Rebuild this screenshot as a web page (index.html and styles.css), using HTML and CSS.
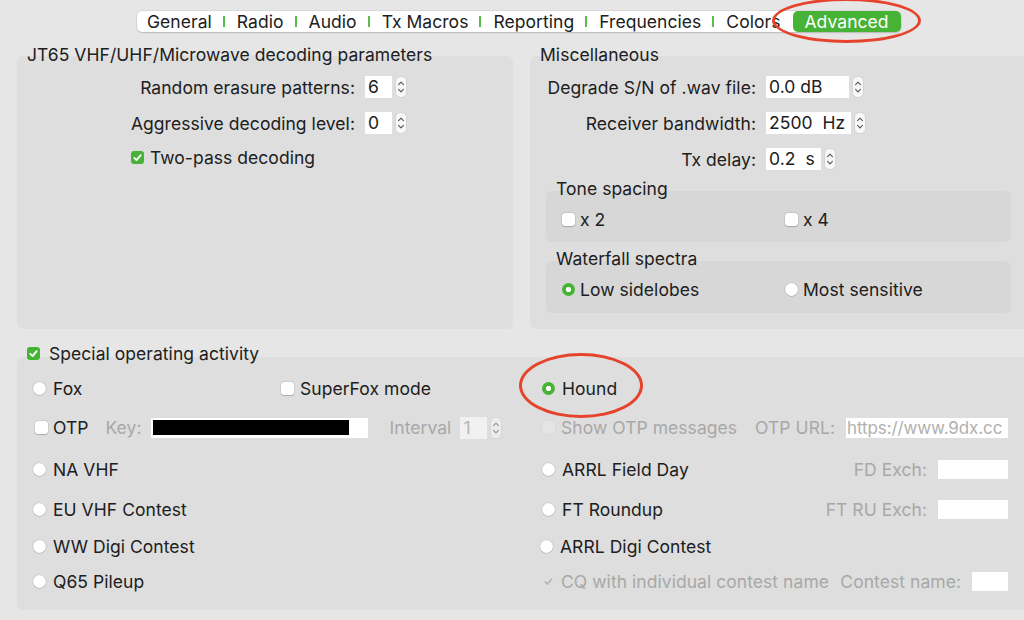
FILE: index.html
```html
<!DOCTYPE html>
<html>
  <head>
    <meta charset="utf-8">
    <title>Settings - Advanced</title>
    <link rel="stylesheet" href="styles.css">
  </head>
  <body>
    <div class="tabs-wrap">
      <div class="tabs">
        <span class="tab">General</span><i class="sep"></i>
        <span class="tab">Radio</span><i class="sep"></i>
        <span class="tab">Audio</span><i class="sep"></i>
        <span class="tab">Tx Macros</span><i class="sep"></i>
        <span class="tab">Reporting</span><i class="sep"></i>
        <span class="tab">Frequencies</span><i class="sep"></i>
        <span class="tab">Colors</span>
        <span class="tab active">Advanced</span>
      </div>
    </div>

    <div class="top">
      <div class="group left">
        <div class="group-title">JT65 VHF/UHF/Microwave decoding parameters</div>
        <div class="group-box">
          <div class="form">
            <span class="lbl">Random erasure patterns:</span>
            <div class="spin">
              <span class="field w27">6</span>
              <svg class="stepper" width="12" height="22" viewBox="0 0 12 22"><rect x="0.5" y="0.5" width="11" height="21" rx="5" fill="#f8f8f8" stroke="#c4c4c4" stroke-width="0.6"/><path d="M3.6 8.6 6 6.2 8.4 8.6M3.6 13.4 6 15.8 8.4 13.4" fill="none" stroke="#5a5a5a" stroke-width="1.2" stroke-linecap="round" stroke-linejoin="round"/></svg>
            </div>
            <span class="lbl">Aggressive decoding level:</span>
            <div class="spin">
              <span class="field w27">0</span>
              <svg class="stepper" width="12" height="22" viewBox="0 0 12 22"><rect x="0.5" y="0.5" width="11" height="21" rx="5" fill="#f8f8f8" stroke="#c4c4c4" stroke-width="0.6"/><path d="M3.6 8.6 6 6.2 8.4 8.6M3.6 13.4 6 15.8 8.4 13.4" fill="none" stroke="#5a5a5a" stroke-width="1.2" stroke-linecap="round" stroke-linejoin="round"/></svg>
            </div>
          </div>
          <div class="check-row">
            <span class="cb on"><svg width="13" height="13" viewBox="0 0 13 13"><path d="M3.3 6.9 5.5 9.1 9.7 4.1" fill="none" stroke="#fff" stroke-width="1.8" stroke-linecap="round" stroke-linejoin="round"/></svg></span>Two-pass decoding
          </div>
        </div>
      </div>

      <div class="group right">
        <div class="group-title">Miscellaneous</div>
        <div class="group-box">
          <div class="form misc">
            <span class="lbl">Degrade S/N of .wav file:</span>
            <div class="spin">
              <span class="field w83">0.0 dB</span>
              <svg class="stepper" width="12" height="22" viewBox="0 0 12 22"><rect x="0.5" y="0.5" width="11" height="21" rx="5" fill="#f8f8f8" stroke="#c4c4c4" stroke-width="0.6"/><path d="M3.6 8.6 6 6.2 8.4 8.6M3.6 13.4 6 15.8 8.4 13.4" fill="none" stroke="#5a5a5a" stroke-width="1.2" stroke-linecap="round" stroke-linejoin="round"/></svg>
            </div>
            <span class="lbl">Receiver bandwidth:</span>
            <div class="spin">
              <span class="field w85">2500&nbsp; Hz</span>
              <svg class="stepper" width="12" height="22" viewBox="0 0 12 22"><rect x="0.5" y="0.5" width="11" height="21" rx="5" fill="#f8f8f8" stroke="#c4c4c4" stroke-width="0.6"/><path d="M3.6 8.6 6 6.2 8.4 8.6M3.6 13.4 6 15.8 8.4 13.4" fill="none" stroke="#5a5a5a" stroke-width="1.2" stroke-linecap="round" stroke-linejoin="round"/></svg>
            </div>
            <span class="lbl">Tx delay:</span>
            <div class="spin">
              <span class="field w55">0.2&nbsp; s</span>
              <svg class="stepper" width="12" height="22" viewBox="0 0 12 22"><rect x="0.5" y="0.5" width="11" height="21" rx="5" fill="#f8f8f8" stroke="#c4c4c4" stroke-width="0.6"/><path d="M3.6 8.6 6 6.2 8.4 8.6M3.6 13.4 6 15.8 8.4 13.4" fill="none" stroke="#5a5a5a" stroke-width="1.2" stroke-linecap="round" stroke-linejoin="round"/></svg>
            </div>
          </div>

          <div class="sub-title tone">Tone spacing</div>
          <div class="sub-box tone">
            <span class="opt"><span class="cb"></span>x 2</span>
            <span class="opt"><span class="cb"></span>x 4</span>
          </div>

          <div class="sub-title fall">Waterfall spectra</div>
          <div class="sub-box fall">
            <span class="opt"><span class="rb on"></span>Low sidelobes</span>
            <span class="opt"><span class="rb"></span>Most sensitive</span>
          </div>
        </div>
      </div>
    </div>

    <div class="group special">
      <div class="group-title"><span class="cb on"><svg width="13" height="13" viewBox="0 0 13 13"><path d="M3.3 6.9 5.5 9.1 9.7 4.1" fill="none" stroke="#fff" stroke-width="1.8" stroke-linecap="round" stroke-linejoin="round"/></svg></span>Special operating activity</div>
      <div class="group-box">
        <div class="row r1">
          <span class="opt"><span class="rb"></span>Fox</span>
          <span class="opt"><span class="cb"></span>SuperFox mode</span>
          <span class="opt"><span class="rb on"></span>Hound</span>
        </div>

        <div class="row r2">
          <div class="otp">
            <span class="opt otp-cb"><span class="cb"></span>OTP</span>
            <span class="dim key-lbl">Key:</span>
            <span class="field key"><span class="secret"></span></span>
            <span class="dim int-lbl">Interval</span>
            <div class="spin">
              <span class="field w27 off">1</span>
              <svg class="stepper off" width="12" height="22" viewBox="0 0 12 22"><rect x="0.5" y="0.5" width="11" height="21" rx="5" fill="#f8f8f8" stroke="#c4c4c4" stroke-width="0.6"/><path d="M3.6 8.6 6 6.2 8.4 8.6M3.6 13.4 6 15.8 8.4 13.4" fill="none" stroke="#5a5a5a" stroke-width="1.2" stroke-linecap="round" stroke-linejoin="round"/></svg>
            </div>
          </div>
          <div class="colc">
            <span class="opt dim"><span class="cb dis"></span>Show OTP messages</span>
            <span class="right-part"><span class="dim">OTP URL:</span><span class="field url">https://www.9dx.cc</span></span>
          </div>
        </div>

        <div class="row">
          <span class="opt"><span class="rb"></span>NA VHF</span>
          <span></span>
          <div class="colc">
            <span class="opt"><span class="rb"></span>ARRL Field Day</span>
            <span class="right-part"><span class="dim">FD Exch:</span><span class="field w70"></span></span>
          </div>
        </div>

        <div class="row r4">
          <span class="opt"><span class="rb"></span>EU VHF Contest</span>
          <span></span>
          <div class="colc">
            <span class="opt"><span class="rb"></span>FT Roundup</span>
            <span class="right-part"><span class="dim">FT RU Exch:</span><span class="field w70"></span></span>
          </div>
        </div>

        <div class="row r5">
          <span class="opt"><span class="rb"></span>WW Digi Contest</span>
          <span></span>
          <div class="colc">
            <span class="opt shift"><span class="rb"></span>ARRL Digi Contest</span>
          </div>
        </div>

        <div class="row r6">
          <span class="opt"><span class="rb"></span>Q65 Pileup</span>
          <span></span>
          <div class="colc">
            <span class="opt dim"><span class="cb dis ck"><svg width="13" height="13" viewBox="0 0 13 13"><path d="M3.3 6.9 5.5 9.1 9.7 4.1" fill="none" stroke="#b4b4b4" stroke-width="1.6" stroke-linecap="round" stroke-linejoin="round"/></svg></span>CQ with individual contest name</span>
            <span class="right-part"><span class="dim">Contest name:</span><span class="field w36"></span></span>
          </div>
        </div>
      </div>
    </div>

    <span class="mark mark-tab"></span>
    <span class="mark mark-hound"></span>
  </body>
</html>
```

FILE: styles.css
```css
* {
  box-sizing: border-box;
}

html, body {
  margin: 0;
}

body {
  position: relative;
  width: 1024px;
  height: 620px;
  overflow: hidden;
  background: #e6e6e6;
  font-family: Inter, "Noto Sans", "Liberation Sans", sans-serif;
  font-size: 17.5px;
  letter-spacing: 0.05px;
  color: #202020;
}

/* tab bar */
.tabs-wrap {
  height: 32px;
  padding: 11px 0 0 137px;
}

.tabs {
  display: inline-flex;
  align-items: center;
  height: 21px;
  background: #fff;
  border-radius: 5px;
  box-shadow: 0 0 0 0.5px rgba(0,0,0,0.1), 0 1px 1.5px rgba(0,0,0,0.15);
}

.tab {
  padding: 0 11px 0 12px;
  line-height: 21px;
  white-space: nowrap;
}

.tab:first-child {
  padding-left: 10px;
}

.sep {
  width: 2px;
  height: 11px;
  background: #5cbd4a;
}

.tab.active {
  padding: 0 12px;
  margin-left: 1px;
  background: #47b336;
  color: #fff;
  border-radius: 5px;
}

/* group boxes */
.top {
  display: flex;
  gap: 17px;
  margin-top: 12px;
  padding-left: 17px;
}

.group-title {
  display: flex;
  align-items: center;
  height: 20px;
  margin-bottom: -8px;
  padding-left: 10px;
  white-space: nowrap;
}

.group-box {
  background: #dedede;
  border-radius: 6px;
}

.left {
  flex: none;
  width: 496px;
}

.right {
  flex: none;
  width: 520px;
}

.left .group-box,
.right .group-box {
  height: 273px;
  padding-top: 20px;
}

.right .group-box {
  border-radius: 6px 0 0 6px;
}

.form {
  display: grid;
  grid-template-columns: 338px auto;
  column-gap: 10px;
  row-gap: 14px;
  align-items: center;
}

.form.misc {
  grid-template-columns: 226px auto;
}

.lbl {
  text-align: right;
  white-space: nowrap;
}

.spin {
  display: flex;
  align-items: center;
  gap: 3px;
  height: 22px;
}

.field {
  display: inline-block;
  height: 22px;
  padding-left: 3px;
  line-height: 22px;
  background: #fff;
  white-space: nowrap;
  overflow: hidden;
}

.w27 { width: 27px; }
.w36 { width: 36px; height: 19px; }
.w55 { width: 55px; }
.w70 { width: 70px; height: 19px; }
.w83 { width: 83px; }
.w85 { width: 85px; }

.stepper {
  display: block;
}

.check-row {
  display: flex;
  align-items: center;
  height: 22px;
  margin-top: 12px;
  padding-left: 114px;
}

/* check boxes and radios */
.cb, .rb {
  display: inline-block;
  flex: none;
  width: 13px;
  height: 13px;
  margin-right: 6px;
  background: #fff;
  box-shadow: 0 0 0 0.5px rgba(0,0,0,0.12), 0 0.5px 1px rgba(0,0,0,0.18);
}

.cb {
  border-radius: 3px;
}

.cb svg {
  display: block;
}

.cb.on {
  background: #47b336;
  box-shadow: none;
}

.cb.dis {
  background: #e4e4e4;
  box-shadow: 0 0 0 0.5px rgba(0,0,0,0.05);
}

.cb.dis.ck {
  background: transparent;
  box-shadow: none;
}

.rb {
  border-radius: 50%;
}

.rb.on {
  background: radial-gradient(circle, #fff 0 2.4px, #47b336 3px);
  box-shadow: none;
}

.opt {
  display: flex;
  align-items: center;
  white-space: nowrap;
}

.dim {
  color: #a8a8a8;
}

/* sub groups in Miscellaneous */
.sub-title {
  height: 20px;
  line-height: 20px;
  margin-bottom: -8px;
  padding-left: 26px;
}

.sub-title.tone {
  margin-top: 9px;
}

.sub-title.fall {
  margin-top: 7px;
}

.sub-box {
  display: grid;
  grid-template-columns: 223px 1fr;
  align-items: center;
  width: 465px;
  margin-left: 16px;
  padding-left: 16px;
  background: #d7d7d7;
  border-radius: 6px;
}

.sub-box.tone {
  height: 51px;
  padding-top: 5px;
}

.sub-box.fall {
  height: 52px;
  padding-top: 4px;
}

.sub-box .opt .cb,
.sub-box .opt .rb {
  margin-right: 5px;
}

/* special operating activity */
.special {
  margin: 14px 0 0 17px;
}

.special .group-title {
  margin-bottom: -6px;
}

.special .group-title .cb {
  margin-right: 9px;
}

.special .group-box {
  width: 1030px;
  height: 253px;
  padding-top: 12px;
  border-radius: 6px 0 0 6px;
}

.row {
  display: grid;
  grid-template-columns: 248px 261px 466px;
  align-items: center;
  height: 42px;
  padding-left: 16px;
}

.row .opt .rb {
  margin-right: 7px;
}

.row.r1 { height: 38px; }
.row.r2 { height: 41px; }
.row.r4 { height: 38px; }
.row.r5 { height: 36px; }
.row.r6 { height: 34px; }

.otp {
  grid-column: 1 / 3;
  display: flex;
  align-items: center;
}

.otp-cb {
  margin-left: 2px;
}

.otp-cb .cb {
  margin-right: 5px;
}

.key-lbl {
  margin-left: 17px;
}

.field.key {
  width: 217px;
  height: 20px;
  margin-left: 9px;
  padding: 2px 0 0 2px;
}

.secret {
  display: block;
  width: 196px;
  height: 15px;
  background: #000;
}

.int-lbl {
  margin: 0 9px 0 22px;
}

.field.off {
  background: #f1f1f1;
  color: #b5b5b5;
}

.stepper.off {
  opacity: 0.55;
}

.colc {
  display: flex;
  align-items: center;
  justify-content: space-between;
}

.right-part {
  display: flex;
  align-items: center;
  gap: 11px;
}

.field.url {
  width: 162px;
  height: 20px;
  line-height: 20px;
  padding-left: 1px;
  font-size: 17px;
  letter-spacing: -0.1px;
  color: #b0b0b0;
}

.shift {
  margin-left: -2px;
}

/* red annotation marks */
.mark {
  position: absolute;
  border: 3.5px solid #e6432d;
  border-radius: 50%;
  pointer-events: none;
}

.mark-tab {
  left: 772px;
  top: -2px;
  width: 149px;
  height: 45px;
}

.mark-hound {
  left: 519px;
  top: 353px;
  width: 124px;
  height: 65px;
}
```
